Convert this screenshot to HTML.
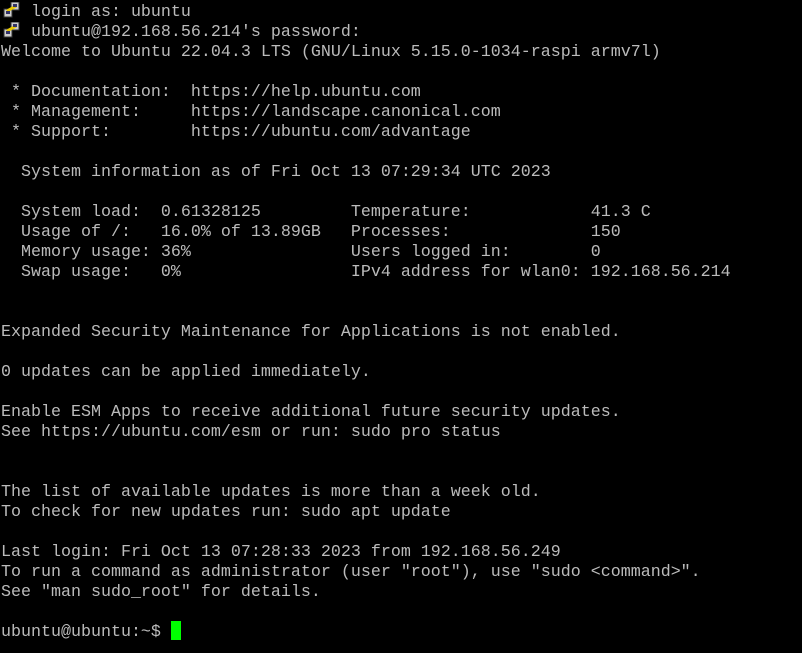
<!DOCTYPE html>
<html><head><style>
html,body{margin:0;padding:0;background:#000;width:802px;height:653px;overflow:hidden}
pre{margin:0;position:absolute;left:1px;top:3px;font-family:"Liberation Mono",monospace;font-size:16.67px;line-height:20px;color:#bbbbbb;white-space:pre}
.ic{position:absolute;left:3px;width:18px;height:16px}
.cur{display:inline-block;width:10px;height:19px;background:#00ff00;vertical-align:top;margin-top:-2px}
</style></head><body>
<svg class="ic" style="top:2px" viewBox="0 0 18 16"><rect x="8" y="0" width="8" height="8" fill="#ccc" stroke="#333"/><rect x="1" y="7" width="8" height="8" fill="#ccc" stroke="#333"/><path d="M4 9 L13 4" stroke="#e8c800" stroke-width="3"/><rect x="10" y="2" width="4" height="3" fill="#336"/><rect x="3" y="9" width="4" height="3" fill="#336"/></svg>
<svg class="ic" style="top:22px" viewBox="0 0 18 16"><rect x="8" y="0" width="8" height="8" fill="#ccc" stroke="#333"/><rect x="1" y="7" width="8" height="8" fill="#ccc" stroke="#333"/><path d="M4 9 L13 4" stroke="#e8c800" stroke-width="3"/><rect x="10" y="2" width="4" height="3" fill="#336"/><rect x="3" y="9" width="4" height="3" fill="#336"/></svg>
<pre>   login as: ubuntu
   ubuntu@192.168.56.214's password:
Welcome to Ubuntu 22.04.3 LTS (GNU/Linux 5.15.0-1034-raspi armv7l)

 * Documentation:  https://help.ubuntu.com
 * Management:     https://landscape.canonical.com
 * Support:        https://ubuntu.com/advantage

  System information as of Fri Oct 13 07:29:34 UTC 2023

  System load:  0.61328125         Temperature:            41.3 C
  Usage of /:   16.0% of 13.89GB   Processes:              150
  Memory usage: 36%                Users logged in:        0
  Swap usage:   0%                 IPv4 address for wlan0: 192.168.56.214


Expanded Security Maintenance for Applications is not enabled.

0 updates can be applied immediately.

Enable ESM Apps to receive additional future security updates.
See https://ubuntu.com/esm or run: sudo pro status


The list of available updates is more than a week old.
To check for new updates run: sudo apt update

Last login: Fri Oct 13 07:28:33 2023 from 192.168.56.249
To run a command as administrator (user "root"), use "sudo &lt;command&gt;".
See "man sudo_root" for details.

ubuntu@ubuntu:~$ <span class="cur"></span></pre>
</body></html>
